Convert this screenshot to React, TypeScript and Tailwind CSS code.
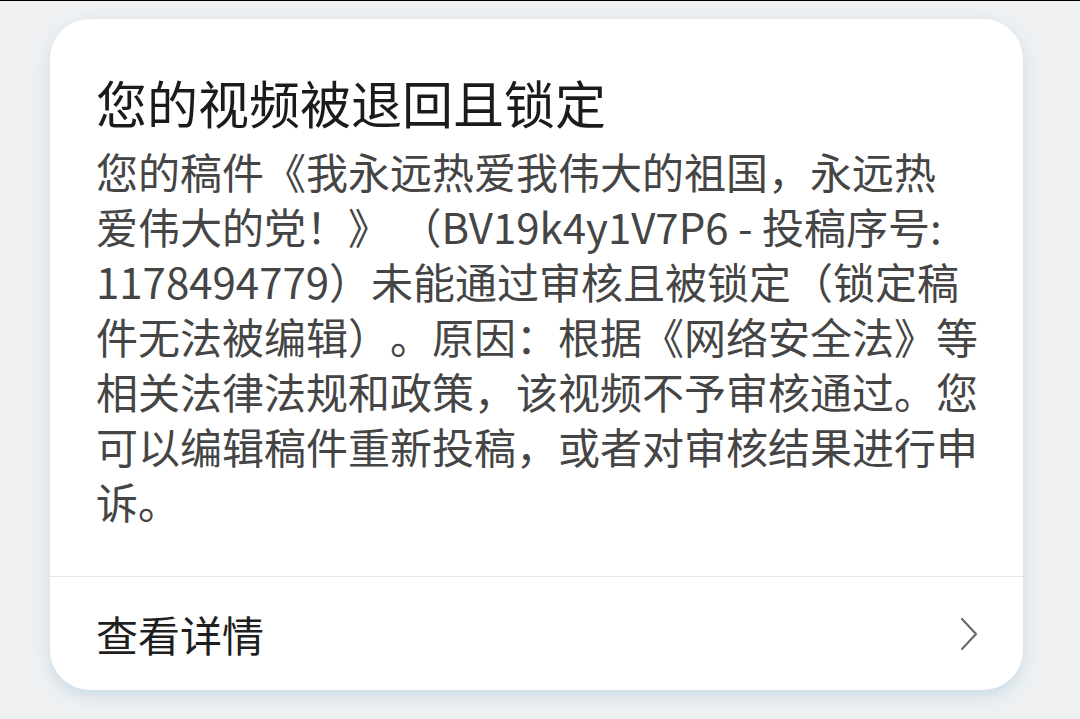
// @ts-nocheck
const FONT = { fontFamily: '"Noto Sans CJK SC", "Noto Sans", sans-serif' };

const LINES = [
    "您的稿件《我永远热爱我伟大的祖国，永远热",
    "爱伟大的党！》 （BV19k4y1V7P6 - 投稿序号:",
    "1178494779）未能通过审核且被锁定（锁定稿",
    "件无法被编辑）。原因：根据《网络安全法》等",
    "相关法律法规和政策，该视频不予审核通过。您",
    "可以编辑稿件重新投稿，或者对审核结果进行申",
    "诉。",
];

export default function App() {
    return (
        <div className="w-[1080px] h-[719px] bg-[#eef0f2] border-t border-black overflow-hidden [text-spacing-trim:space-all]" style={FONT}>
            <div className="ml-[50px] mt-[18px] w-[973px] bg-white rounded-[40px] shadow-[0_6px_14px_rgba(160,195,215,0.45)] overflow-hidden">
                {/* 正文 */}
                <div className="pl-[46px] pr-[40px] pt-[53px] pb-[48px]">
                    <h1 className="text-[51px] leading-[60px] text-[#1b1b1b] font-normal">您的视频被退回且锁定</h1>
                    <div className="mt-[11px] text-[42px] leading-[55px] text-[#454545]">
                        {LINES.map((l, i) => (
                            <div key={i} className="whitespace-nowrap">{l}</div>
                        ))}
                    </div>
                </div>
                <div className="h-px bg-[#e6e6e6]" />
                {/* 查看详情 */}
                <div className="h-[113px] pl-[46px] pr-[40px] flex items-center justify-between">
                    <span className="text-[42px] text-[#1f1f1f]">查看详情</span>
                    <svg width="20" height="34" viewBox="0 0 20 34" className="mr-[4px]">
                        <path d="M3 2 L17 17 L3 32" fill="none" stroke="#6a6a6a" strokeWidth="2.2" strokeLinecap="round" strokeLinejoin="round" />
                    </svg>
                </div>
            </div>
        </div>
    );
}
